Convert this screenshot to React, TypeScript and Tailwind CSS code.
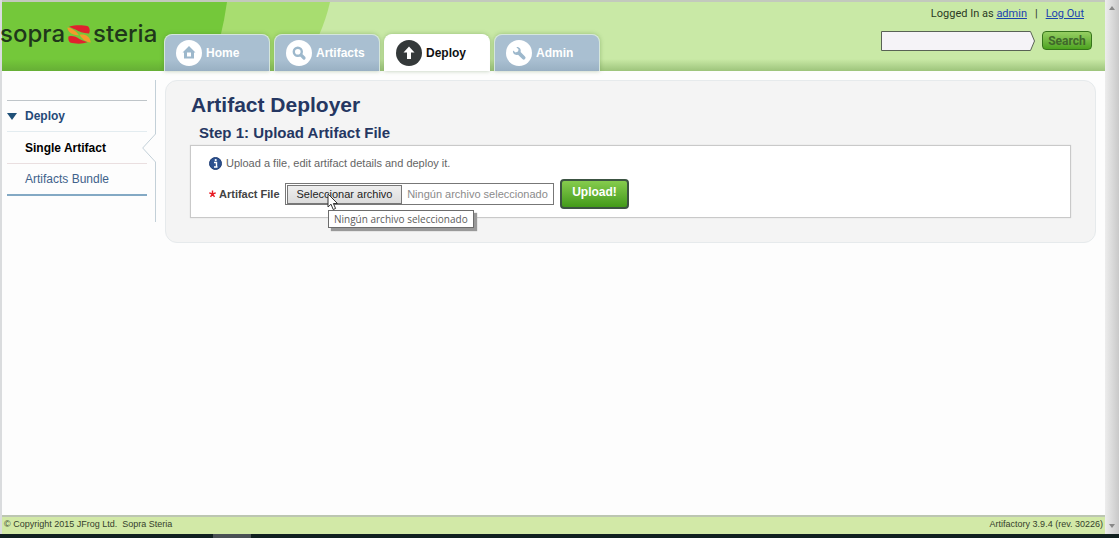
import type { ReactNode } from 'react';

const glyphs: Record<string, ReactNode> = {
  home: (
    <path fillRule="evenodd" d="M13 6 19.5 12.5H18V18.5H8V12.5H6.5ZM11 12.5V16.5H15V12.5Z" fill="currentColor" />
  ),
  artifacts: (
    <g fill="none" stroke="currentColor">
      <circle cx="11.8" cy="11.8" r="4" strokeWidth="2.4" />
      <path d="M15.2 15.2 18 18" strokeWidth="3.2" strokeLinecap="round" />
    </g>
  ),
  deploy: <path d="M13 6.5 18.5 12.5H15V19H11V12.5H7.5Z" fill="currentColor" />,
  admin: (
    <path
      d="M7 10.5C6.5 13.7 9.2 15.6 12 14.7L16.4 19A1.8 1.8 0 0 0 19 16.4L14.6 12.1C15.4 9.2 13.4 6.5 10.3 7L12.6 9.4 12 11.6 9.6 12.4Z"
      fill="currentColor"
    />
  ),
};

const tabs = [
  { id: 'home', label: 'Home' },
  { id: 'artifacts', label: 'Artifacts' },
  { id: 'deploy', label: 'Deploy' },
  { id: 'admin', label: 'Admin' },
];

function Tab({ id, label }: { id: string; label: string }) {
  const active = id === 'deploy';
  return (
    <a
      href={'#' + id}
      aria-current={active ? 'page' : undefined}
      className={
        'flex h-[37px] w-[106px] items-center gap-1 rounded-t-lg border border-b-0 pl-[11px] text-xs font-bold shadow-[0_0_4px_rgba(60,110,40,0.35)] ' +
        (active
          ? 'border-white bg-white text-[#111111]'
          : 'border-[#d5e6dc] bg-linear-to-b from-[#a9bfd1] from-70% to-[#99b0c3] text-white')
      }
    >
      <svg viewBox="0 0 26 26" className={'size-[26px] shrink-0 ' + (active ? 'text-white' : 'text-[#9db8cc]')} aria-hidden="true">
        <circle cx="13" cy="13" r="13" fill={active ? '#34393a' : '#ffffff'} />
        {glyphs[id]}
      </svg>
      {label}
    </a>
  );
}

function Header() {
  return (
    <header className="relative flex h-[71px] border-t-2 border-[#c3c9bd] bg-[#c9e9a6]">
      <svg className="absolute top-0 left-0" width="340" height="69" aria-hidden="true">
        <path d="M0 0H328Q321 32 298 69H0Z" fill="#a8dd70" />
        <path d="M0 0H225Q220 36 208 69H0Z" fill="#74c83a" />
      </svg>
      <div className="absolute inset-x-0 bottom-0 h-3 bg-linear-to-b from-transparent to-[#4c7f2c]/35" />
      <div className="relative flex w-[162px] shrink-0 items-start pt-[18px]">
        <a href="#home" aria-label="Sopra Steria" className="-ml-0.5 flex items-center font-['Inter',sans-serif] text-2xl leading-7 font-medium text-[#20371b]">
          <span>sopra</span>
          <svg className="mx-0.5 shrink-0" width="24" height="19" viewBox="0 0 24 19" aria-hidden="true">
            <path d="M2 1.5C9 -.3 16 .2 21 1.2C23 3.5 23.2 6 22 8.5C16 8.5 12 6.500 8.5 4.600C6.5 3.6 4.5 3 2 1.5Z" fill="#e0222e" />
            <path d="M.3 2.500C4.500 3 9 6 12 10.300C7.500 10.300 1.500 9 .3 2.500Z" fill="#f59a2c" />
            <path d="M23.7 17.500C18.500 17 15.500 14.500 12.500 9.800C18 8.800 23 11 23.700 17.500Z" fill="#f59a2c" />
            <path d="M1.5 11.5C6 10.300 9 12 12.500 14C15 15.600 18 16 20.5 17.300C15.5 19.2 8 19 3 17.5C1.3 15.5 1 13.5 1.5 11.5Z" fill="#e0222e" />
          </svg>
          <span>steria</span>
        </a>
      </div>
      <nav aria-label="Main" className="relative flex items-end gap-1">
        {tabs.map((tab) => (
          <Tab key={tab.id} id={tab.id} label={tab.label} />
        ))}
      </nav>
      <div className="relative ml-auto flex flex-col items-end pt-1 pr-[13px]">
        <p className="mr-2 font-['Roboto',sans-serif] text-[11px] leading-4 text-[#2b3a24]">
          Logged In as{' '}
          <a href="#admin" className="text-[#1b43b0] underline">admin</a>
          <span className="mx-2">|</span>
          <a href="#logout" className="text-[#1b43b0] underline">Log Out</a>
        </p>
        <form className="mt-[9px] flex gap-[7px]" onSubmit={(event) => event.preventDefault()}>
          <div className="relative h-5 w-[154px]">
            <svg className="absolute inset-0" width="154" height="20" aria-hidden="true">
              <path d="M.5 .5H149.5L153.5 10 149.5 19.5H.5Z" fill="#f5f3f7" stroke="#596255" />
            </svg>
            <input aria-label="Search artifacts" type="text" className="relative h-5 w-[148px] bg-transparent px-1 text-xs outline-none" />
          </div>
          <button type="submit" className="h-[19px] w-[50px] rounded-sm border border-[#36741c] bg-linear-to-b from-[#96cf62] to-[#4ca31d] font-['Roboto',sans-serif] text-xs leading-4 font-bold text-[#40672b]">
            Search
          </button>
        </form>
      </div>
    </header>
  );
}

function Sidebar() {
  return (
    <nav aria-label="Deploy" className="flex w-[163px] shrink-0 items-start pt-[9px] pl-[5px] text-xs">
      <ul className="mt-5 w-[140px] shrink-0 border-t border-b-2 border-t-[#bfc5c9] border-b-[#83a9c4]">
        <li className="flex h-[31px] items-center border-b border-[#e3ecf0] font-bold text-[#254a78]">
          <svg width="10" height="7" aria-hidden="true"><path d="M0 0H10L5 7Z" fill="#1f5078" /></svg>
          <a href="#deploy" className="ml-2">Deploy</a>
        </li>
        <li className="flex h-8 items-center border-b border-[#eadfe0] pl-[18px] font-bold text-black">
          <a href="#single" aria-current="page">Single Artifact</a>
        </li>
        <li className="flex h-[30px] items-center pl-[18px] text-[#3f628b]">
          <a href="#bundle">Artifacts Bundle</a>
        </li>
      </ul>
      <svg width="14" height="142" className="-ml-[5px] shrink-0" aria-hidden="true">
        <path d="M13.5 0V54L.7 68 13.5 82V142" fill="none" stroke="#c3d0d8" />
      </svg>
    </nav>
  );
}

function FilePicker() {
  return (
    <div className="relative">
      <label
        htmlFor="artifact-file"
        className="flex h-[22px] w-[269px] cursor-pointer items-center border border-[#777777] bg-white pl-px text-[11px] text-[#8b8b8b]"
      >
        <span className="flex h-[19px] w-[115px] items-center justify-center border border-[#777777] bg-linear-to-b from-[#eeeeee] to-[#dcdcdc] text-[#1e1e1e]">
          Seleccionar archivo
        </span>
        <span className="flex-1 text-center">Ningún archivo seleccionado</span>
      </label>
      <input id="artifact-file" type="file" className="sr-only" />
      <svg className="absolute top-2.5 left-[42px] z-20" width="12" height="19" aria-hidden="true">
        <path d="M1 1V14L4 11.2 6.2 16.5 8.6 15.5 6.4 10.5H10.5Z" fill="#ffffff" stroke="#333333" />
      </svg>
      <div
        role="tooltip"
        className="absolute top-[27px] left-[43px] z-10 border border-[#6c6c6c] bg-white px-[5px] font-['Open_Sans',sans-serif] text-[10px] leading-4 whitespace-nowrap text-[#5c5c5c] shadow-[3px_3px_1px_#999999]"
      >
        Ningún archivo seleccionado
      </div>
    </div>
  );
}

function Deployer() {
  return (
    <main className="mt-[9px] mr-[9px] h-fit flex-1 rounded-xl border border-[#e6eaec] bg-[#f4f4f4] pr-6 pb-6 pl-6">
      <h1 className="mt-3 ml-px text-[21px] leading-6 font-bold text-[#253762]">Artifact Deployer</h1>
      <h2 className="mt-2 ml-[9px] text-[15px] leading-4 font-bold text-[#253762]">Step 1: Upload Artifact File</h2>
      <section className="mt-1 border border-[#c9c9c9] bg-white px-[18px] pt-2 pb-2 shadow-[0_0_1px_#cccccc]">
        <p className="flex h-[18px] items-center gap-1 text-[11px] text-[#646464]">
          <svg width="13" height="13" viewBox="0 0 13 13" aria-hidden="true">
            <circle cx="6.5" cy="6.5" r="6" fill="#2c5190" stroke="#1f3d74" />
            <path d="M5 5.5H7.5V10M5 10H8.5" fill="none" stroke="#ffffff" strokeWidth="1.4" />
            <circle cx="6.7" cy="3.1" r="1.1" fill="#ffffff" />
          </svg>
          Upload a file, edit artifact details and deploy it.
        </p>
        <form className="mt-[7px] flex items-center" onSubmit={(event) => event.preventDefault()}>
          <svg width="7" height="8" viewBox="0 0 8 8" aria-hidden="true">
            <path d="M4 4V0M4 4 .3 2.8M4 4 7.7 2.8M4 4 1.7 7.2M4 4 6.3 7.2" stroke="#e81c24" strokeWidth="1.6" />
          </svg>
          <label htmlFor="artifact-file" className="w-[69px] pl-[3px] text-[11px] font-bold text-[#444444]">Artifact File</label>
          <FilePicker />
          <button type="submit" className="ml-1.5 h-[30px] w-[69px] rounded-sm border-2 border-[#3c5442] bg-linear-to-b from-[#85cc4d] to-[#429b18] pb-1 text-xs font-bold text-white">
            Upload!
          </button>
        </form>
      </section>
    </main>
  );
}

function ScrollRail() {
  return (
    <div className="flex w-3.5 shrink-0 flex-col items-center justify-between bg-linear-to-r from-[#ededed] to-[#c9c9c9] pt-1.5 pb-1.5" aria-hidden="true">
      <svg width="6" height="4"><path d="M0 4 3 0 6 4Z" fill="#888888" /></svg>
      <svg width="6" height="4"><path d="M0 0 3 4 6 0Z" fill="#888888" /></svg>
    </div>
  );
}

export default function App() {
  return (
    <div className="flex min-h-screen flex-col bg-[#fdfdfd] font-['Liberation_Sans',Arial,sans-serif]">
      <div className="flex flex-1">
        <div className="flex min-w-0 flex-1 flex-col border-l-2 border-[#dadcde]">
          <Header />
          <div className="flex flex-1">
            <Sidebar />
            <Deployer />
          </div>
          <footer className="flex h-[19px] items-center justify-between border-t-2 border-[#bcc6b2] bg-[#d2e9a7] px-0.5 pb-0.5 text-[9px] text-[#35402c]">
            <p>© Copyright 2015 JFrog Ltd.&nbsp; Sopra Steria</p>
            <p>Artifactory 3.9.4 (rev. 30226)</p>
          </footer>
        </div>
        <ScrollRail />
      </div>
      <div className="flex h-1 bg-[#10201f]">
        <div className="ml-[213px] w-[38px] bg-[#4a5154]" />
      </div>
    </div>
  );
}
